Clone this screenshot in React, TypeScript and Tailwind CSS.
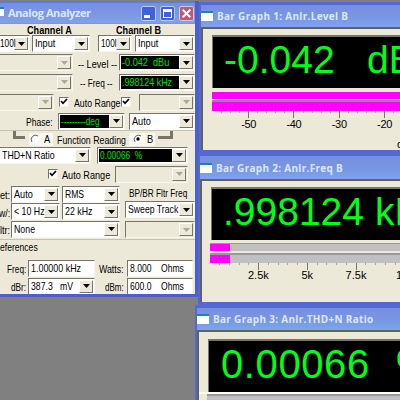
import type { ReactNode } from "react";
import clsx from "clsx";

interface FieldProps {
  text?: string;
  className?: string;
  textClass?: string;
  tone?: "light" | "disabled" | "meter";
  arrow?: boolean;
}

interface GraphWindowProps {
  title: string;
  value: string;
  unit: string;
  className: string;
  headerClass?: string;
  displayClass?: string;
  children?: ReactNode;
}

// Narrow system-style lettering, squeezed from the left edge
function Txt({ children, className = "scale-x-[0.83]" }: { children: ReactNode; className?: string }) {
  return (
    <span className={clsx("inline-block origin-left text-[11px] leading-[12px] whitespace-pre", className)}>
      {children}
    </span>
  );
}

function Arrow({ disabled }: { disabled?: boolean }) {
  return (
    <span className="flex h-full w-[14px] shrink-0 items-center justify-center border border-t-white border-r-[#777469] border-b-[#777469] border-l-white bg-[#ece9d8]">
      <svg width="7" height="4" viewBox="0 0 7 4">
        <path d="M0 0h7L3.5 4z" fill={disabled ? "#aca899" : "#000"} />
      </svg>
    </span>
  );
}

function Field({ text, className, textClass = "scale-x-[0.83]", tone = "light", arrow = true }: FieldProps) {
  return (
    <div
      className={clsx(
        "flex h-[17px] shrink-0 border border-t-[#77756b] border-r-[#f8f7f0] border-b-[#f8f7f0] border-l-[#77756b] p-px",
        tone === "disabled" ? "bg-[#ece9d8]" : "bg-white",
        className
      )}
    >
      <div className={clsx("min-w-0 flex-1 pl-px", tone === "meter" && "bg-black text-[#00e000]")}>
        {text && <Txt className={clsx("align-top", textClass)}>{text}</Txt>}
      </div>
      {arrow && <Arrow disabled={tone === "disabled"} />}
    </div>
  );
}

function Check({ className }: { className?: string }) {
  return (
    <span className={clsx("size-[10px] shrink-0 border border-t-[#77756b] border-r-[#f4f2e8] border-b-[#f4f2e8] border-l-[#77756b] bg-white", className)}>
      <svg width="8" height="8" viewBox="0 0 8 8">
        <path d="M1 3l2 2.3L7 1" fill="none" stroke="#000" strokeWidth="1.7" />
      </svg>
    </span>
  );
}

function Radio({ checked }: { checked?: boolean }) {
  return (
    <svg width="10" height="10" viewBox="0 0 10 10" className="shrink-0">
      <circle cx="5" cy="5" r="4" fill="#fff" />
      <path d="M2 8a4.3 4.3 0 0 1 6-6" fill="none" stroke="#5f5d55" />
      {checked && <circle cx="5" cy="5" r="1.7" fill="#000" />}
    </svg>
  );
}

function WindowIcon() {
  return <span className="h-[10px] w-[12px] shrink-0 border-t-2 border-t-[#1684b8] bg-white" />;
}

function Analyzer() {
  return (
    <div className="absolute top-[1px] left-0 h-[296px] w-[199px] overflow-hidden border-r-4 border-b-[3px] border-[#4b60ce] bg-[#ece9d8]">
      <div className="flex h-[22px] items-center border-t-2 border-t-[#6577d8] bg-linear-to-b from-[#7391e2] via-[#7b96e2] to-[#7fa2ea]">
        <span className="mb-1 h-[9px] w-[4px] border-t-2 border-t-[#1684b8] bg-white" />
        <span className="ml-[4px] w-[133px] font-['Open_Sans'] text-[11px] leading-[14px] font-bold tracking-[-0.4px] whitespace-nowrap text-[#dbe7ff]">
          Analog Analyzer
        </span>
        <div className="flex gap-[4px]">
          <span className="flex size-[15px] items-end rounded-[2px] border border-[#b9c9f8] bg-[#3f61dc] p-[2px]">
            <span className="h-[3px] w-[6px] bg-white" />
          </span>
          <span className="flex size-[15px] items-center justify-center rounded-[2px] border border-[#b9c9f8] bg-[#3f61dc]">
            <span className="h-[9px] w-[9px] border border-t-[3px] border-white" />
          </span>
          <span className="flex size-[15px] items-center justify-center rounded-[2px] border border-[#dcc3d8] bg-[#b45e78]">
            <svg width="9" height="9" viewBox="0 0 9 9">
              <path d="M0.7 0.7l7.6 7.6M8.3 0.7L0.7 8.3" stroke="#fff" strokeWidth="2" />
            </svg>
          </span>
        </div>
      </div>

      <div className="flex h-[12px] border-t border-[#99968a] pl-[27px] font-bold">
        <Txt className="w-[89px] scale-x-[0.83]">Channel A</Txt>
        <Txt className="scale-x-[0.83]">Channel B</Txt>
      </div>
      <div className="flex h-[18px]">
        <Field text="100l" className="-ml-[3px] w-[33px]" textClass="scale-x-[0.75]" />
        <Field text="Input" className="ml-[2px] w-[58px]" />
        <Field text="100l" className="ml-[8px] w-[34px]" textClass="scale-x-[0.75]" />
        <Field text="Input" className="ml-[3px] w-[60px]" />
      </div>
      <div className="flex h-[19px] items-center">
        <Field tone="disabled" className="-ml-[3px] w-[76px]" />
        <div className="w-[46px] pl-[5px]"><Txt>-- Level --</Txt></div>
        <Field text="-0.042  dBu" tone="meter" className="w-[76px]" />
      </div>
      <div className="flex h-[20px] items-center">
        <Field tone="disabled" className="-ml-[3px] w-[76px]" />
        <div className="w-[46px] pl-[7px]"><Txt className="scale-x-[0.75]">-- Freq --</Txt></div>
        <Field text=".998124 kHz" tone="meter" className="w-[76px]" textClass="scale-x-[0.81]" />
      </div>
      <div className="flex h-[20px] items-center">
        <Field tone="disabled" className="-ml-[3px] w-[57px]" />
        <Check className="ml-[5px]" />
        <div className="ml-[5px] w-[46px]"><Txt className="scale-x-[0.8]">Auto Range</Txt></div>
        <Check className="ml-px" />
        <Field tone="disabled" className="ml-[8px] w-[56px]" />
      </div>
      <div className="flex h-[18px] items-center">
        <div className="w-[58px] pl-[26px]"><Txt className="scale-x-[0.78]">Phase:</Txt></div>
        <Field text="---------deg" tone="meter" className="w-[67px]" textClass="scale-x-[0.75]" />
        <Field text="Auto" className="ml-[4px] w-[66px]" />
      </div>

      <div className="flex h-[16px] items-center border-t border-[#c5c2b3]">
        <span className="-mt-[8px] ml-[13px] h-[8px] w-[12px] border-b-[3px] border-l-[3px] border-[#77756b]" />
        <div className="mt-[1px] ml-[4px] flex h-[13px] w-[24px] items-center bg-[#f8f7f0] pl-px">
          <Radio />
          <Txt className="ml-[4px] scale-x-[0.85]">A</Txt>
        </div>
        <div className="ml-[4px] w-[72px]"><Txt className="scale-x-[0.8]">Function Reading</Txt></div>
        <div className="mt-[1px] flex h-[13px] w-[26px] items-center bg-[#f8f7f0] pl-[4px]">
          <Radio checked />
          <Txt className="ml-[4px] scale-x-[0.85]">B</Txt>
        </div>
        <span className="-mt-[8px] ml-[3px] h-[8px] w-[15px] border-r-[3px] border-b-[3px] border-[#77756b]" />
      </div>

      <div className="flex h-[18px] items-center">
        <Field text="THD+N Ratio" className="-ml-[2px] w-[93px]" textClass="ml-px scale-x-[0.8]" />
        <Field text="0.00066  %" tone="meter" className="ml-[6px] w-[91px]" textClass="scale-x-[0.76]" />
      </div>
      <div className="flex h-[20px] items-center">
        <Check className="ml-[48px]" />
        <div className="ml-[4px] w-[53px]"><Txt>Auto Range</Txt></div>
        <Field tone="disabled" className="w-[73px]" />
      </div>

      <div className="mt-px flex h-[53px]">
        <div className="w-[125px]">
          <div className="flex h-[18px] items-center">
            <div className="w-[11px]"><Txt>et:</Txt></div>
            <Field text="Auto" className="w-[49px]" />
            <Field text="RMS" className="ml-[2px] w-[58px]" textClass="scale-x-[0.78]" />
          </div>
          <div className="flex h-[17px] items-center">
            <div className="w-[11px]"><Txt className="-ml-px scale-x-[0.8]">w/:</Txt></div>
            <Field text="< 10 Hz" className="w-[49px]" textClass="scale-x-[0.8]" />
            <Field text="22 kHz" className="ml-[2px] w-[58px]" textClass="scale-x-[0.8]" />
          </div>
          <div className="flex h-[18px] items-center">
            <div className="w-[11px]"><Txt>ltr:</Txt></div>
            <Field text="None" className="w-[109px]" textClass="scale-x-[0.8]" />
          </div>
        </div>
        <div className="w-[70px]">
          <div className="flex h-[16px] items-center pl-[4px]"><Txt className="scale-x-[0.75]">BP/BR Fltr Freq</Txt></div>
          <Field text="Sweep Track" className="w-[70px]" textClass="scale-x-[0.79]" />
          <Field tone="disabled" className="mt-[3px] w-[70px]" />
        </div>
      </div>

      <div className="mt-[1px] flex h-[20px] items-center border-t border-[#c5c2b3] pb-[5px]">
        <Txt className="scale-x-[0.78]">eferences</Txt>
      </div>
      <div className="flex h-[18px] items-center">
        <div className="w-[28px] pl-[7px]"><Txt className="scale-x-[0.75]">Freq:</Txt></div>
        <Field text="1.00000 kHz" arrow={false} className="w-[67px]" textClass="scale-x-[0.81]" />
        <div className="w-[32px] pl-[4px]"><Txt className="scale-x-[0.8]">Watts:</Txt></div>
        <Field text="8.000    Ohms" arrow={false} className="w-[66px]" textClass="scale-x-[0.78]" />
      </div>
      <div className="flex h-[18px] items-center">
        <div className="w-[28px] pl-[11px]"><Txt className="scale-x-[0.75]">dBr:</Txt></div>
        <Field text="387.3   mV" className="w-[67px]" textClass="scale-x-[0.79]" />
        <div className="w-[32px] pl-[10px]"><Txt className="scale-x-[0.73]">dBm:</Txt></div>
        <Field text="600.0    Ohms" arrow={false} className="w-[66px]" textClass="scale-x-[0.78]" />
      </div>
    </div>
  );
}

function Ruler({ ticks, gap, major, className }: { ticks: number; gap: number; major: number; className: string }) {
  return (
    <svg width="192" height="7" className={className}>
      {Array.from({ length: ticks }, (_, i) => {
        const isMajor = i % 5 === major;
        const x = Math.round(i * gap) + 0.5;
        return <path key={i} d={`M${x} 0v${isMajor ? 7 : 2}`} stroke={isMajor ? "#77756b" : "#aaa799"} />;
      })}
    </svg>
  );
}

function GraphWindow({ title, value, unit, className, headerClass, displayClass, children }: GraphWindowProps) {
  return (
    <div className={clsx("absolute overflow-hidden border-t-[3px] border-l-2 border-[#5269d2] bg-[#ece9d8]", className)}>
      <div className={clsx("flex items-center gap-[4px] bg-linear-to-b from-[#7590e0] via-[#7895e1] to-[#7ea4ed]", headerClass)}>
        <WindowIcon />
        <span className="font-['Open_Sans'] text-[10px] leading-[14px] font-bold tracking-[0.3px] whitespace-nowrap text-[#dbe7ff]">{title}</span>
      </div>
      <div className="h-full border-t-2 border-l-2 border-t-[#62615b] border-l-[#62615b]">
        <div className={clsx("flex h-[53px] border-t-2 border-l border-[#77756b] bg-black leading-[46px] whitespace-pre text-[#00ff18]", displayClass)}>
          <span className="shrink-0">{value}</span>
          <span>{unit}</span>
        </div>
        {children}
      </div>
    </div>
  );
}

export default function App() {
  return (
    <div className="relative h-[400px] w-[400px] overflow-hidden bg-[#808080] font-['Liberation_Sans',sans-serif] text-black">
      <Analyzer />

      <GraphWindow
        title="Bar Graph 1: Anlr.Level B"
        value="-0.042"
        unit="dBu"
        className="top-[2px] left-[199px] h-[152px] w-[220px] border-b-4"
        headerClass="h-[22px]"
        displayClass="mt-[6px] ml-[9px] pl-[11px] text-[39px] [&>span:first-child]:w-[143px]"
      >
        <div className="mt-[4px] ml-[9px] h-[7px] bg-[#ff00ff]" />
        <div className="mt-px ml-[9px] h-[11px] border-t-2 border-[#8f8d94] bg-[#ff00ff]" />
        <Ruler ticks={20} gap={9.06} major={3} className="ml-[18px]" />
        <div className="-mt-px ml-[23px] flex text-[11px] leading-[14px]">
          {["-50", "-40", "-30", "-20"].map((n) => (
            <span key={n} className="w-[45.3px] shrink-0 text-center tracking-[-0.3px]">{n}</span>
          ))}
        </div>
        <div className="mt-[6px] ml-[194px] text-[11px] leading-[14px]">dBu</div>
      </GraphWindow>

      <GraphWindow
        title="Bar Graph 2: Anlr.Freq B"
        value=".998124"
        unit="kHz"
        className="top-[153px] left-[198px] h-[153px] w-[220px] border-b-4"
        headerClass="h-[23px]"
        displayClass="mt-[6px] ml-[9px] pl-[11px] text-[39px] [&>span:first-child]:w-[152px]"
      >
        <div className="mt-[3px] ml-[8px] h-[8px] border-t border-[#99979b] bg-[#c0c0c0]">
          <div className="h-full w-[20px] bg-[#ff00ff]" />
        </div>
        <div className="mt-[2px] ml-[8px] h-[10px] border-t-2 border-[#99979b] bg-[#c0c0c0]">
          <div className="h-full w-[20px] bg-[#ff00ff]" />
        </div>
        <Ruler ticks={19} gap={9.75} major={4} className="ml-[17px]" />
        <div className="-mt-[2px] ml-[32px] flex text-[11px] leading-[14px]">
          {["2.5k", "5k", "7.5k", "10k"].map((n) => (
            <span key={n} className="w-[48.8px] shrink-0 text-center">{n}</span>
          ))}
        </div>
      </GraphWindow>

      <GraphWindow
        title="Bar Graph 3: Anlr.THD+N Ratio"
        value="0.00066"
        unit="%"
        className="top-[305px] left-[195px] h-[110px] w-[220px]"
        headerClass="h-[22px]"
        displayClass="mt-[7px] ml-[9px] pl-[12px] text-[40px] [&>span:first-child]:w-[175px] [&>span:first-child]:tracking-[0.6px]"
      >
        <div className="h-[2px] bg-[#fffdf0]" />
        <div className="ml-[8px] h-[10px] border-t-2 border-[#99979b] bg-[#c0c0c0]" />
      </GraphWindow>
    </div>
  );
}
